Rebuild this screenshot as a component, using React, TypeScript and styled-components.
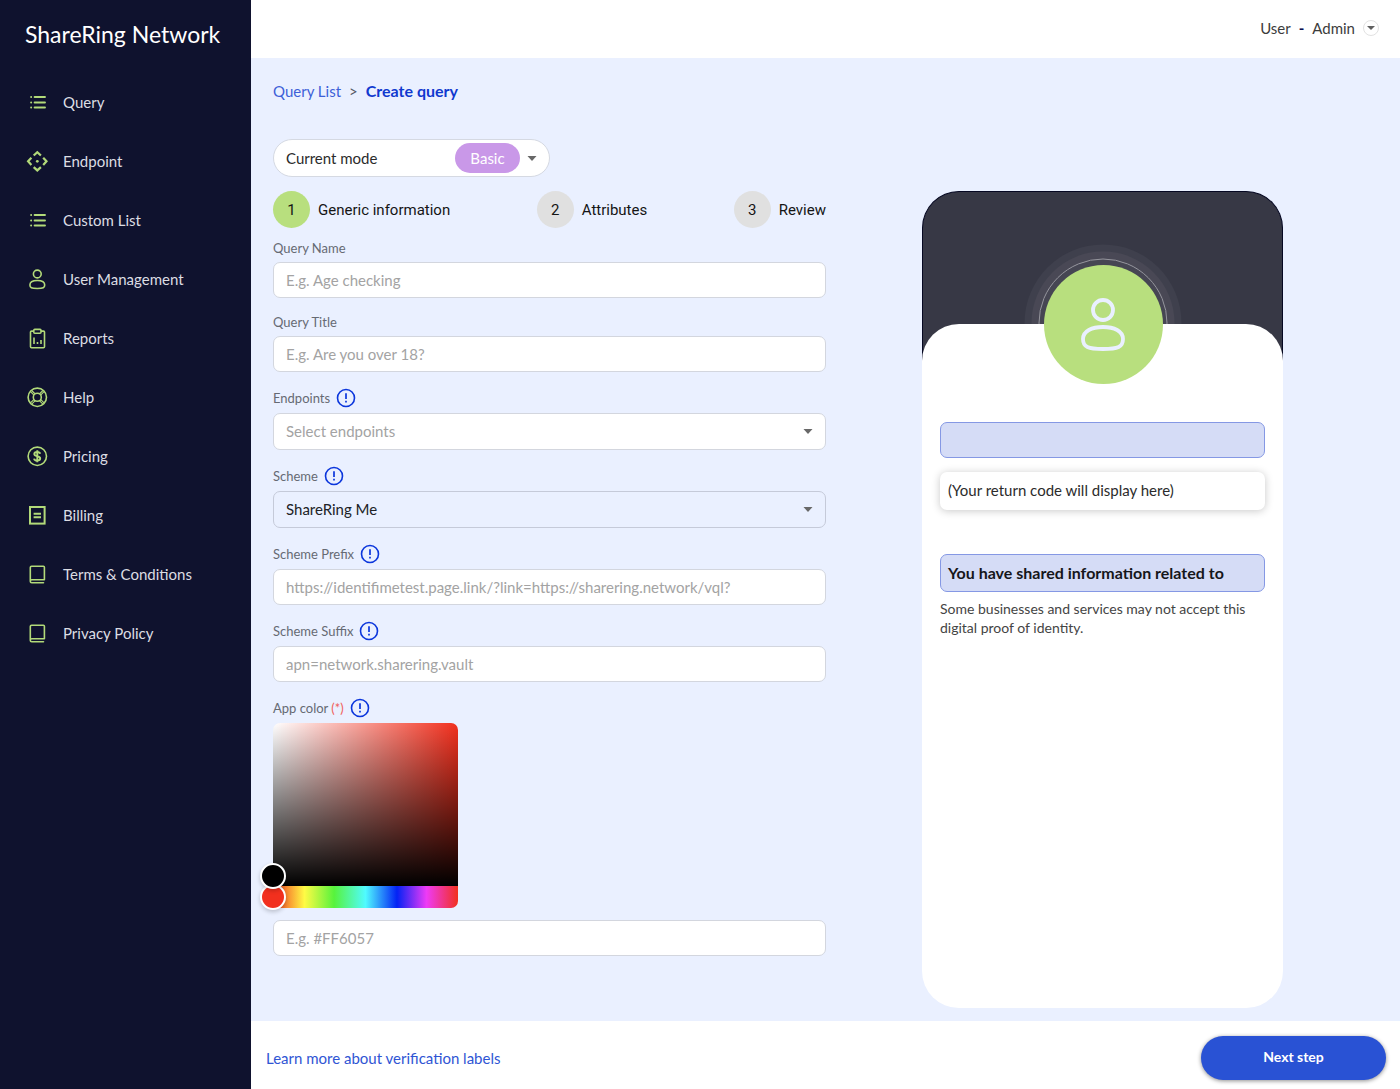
import React, { useState } from "react";
import styled, { createGlobalStyle } from "styled-components";

const GlobalStyle = createGlobalStyle`
  *, *::before, *::after { box-sizing: border-box; }
  body {
    margin: 0;
    background: #ffffff;
    color: #2b2b2b;
    font-family: Lato, "Open Sans", sans-serif;
    font-size: 15px;
    line-height: 20px;
  }
  button, input, select { font: inherit; color: inherit; margin: 0; }
  a { text-decoration: none; }
`;

const Page = styled.div`
  display: grid;
  grid-template-columns: 251px minmax(0, 1fr);
  min-height: 100vh;
`;

const Sidebar = styled.aside`
  background: #0f122e;
`;

const Brand = styled.h1`
  margin: 0;
  padding: 19px 25px 23px;
  color: #ffffff;
  font-size: 23px;
  line-height: 30px;
  font-weight: 400;
`;

const NavLink = styled.a`
  display: flex;
  align-items: center;
  gap: 14px;
  height: 59px;
  padding-left: 25px;
  color: #dcdde3;
`;

const NavIcon = styled.svg`
  width: 24px;
  height: 24px;
  flex: none;
  fill: none;
  stroke: #b2da79;
  stroke-width: 1.6;
`;

const Workspace = styled.div`
  display: flex;
  flex-direction: column;
`;

const TopBar = styled.header`
  display: flex;
  justify-content: flex-end;
  height: 58px;
  padding: 18px 21px 0 0;
`;

const AccountButton = styled.button`
  display: flex;
  align-items: center;
  gap: 8px;
  height: 20px;
  padding: 0;
  border: 0;
  background: none;
  color: #3c3c3c;
`;

const AccountDash = styled.span`
  color: #0b1050;
  font-weight: 700;
`;

const RoundCaret = styled.span`
  display: grid;
  place-items: center;
  width: 16px;
  height: 16px;
  border: 1px solid #e2e2e2;
  border-radius: 50%;
`;

const Main = styled.main`
  display: flex;
  flex-direction: column;
  flex: 1;
  padding: 23px 21px 13px 22px;
  background: #eaf0ff;
`;

const Breadcrumb = styled.nav`
  display: flex;
  gap: 8px;
  color: #555b68;
`;

const Crumb = styled.a<{ $current?: boolean }>`
  color: ${(p) => (p.$current ? "#1039cf" : "#3d60d8")};
  font-size: ${(p) => (p.$current ? "16px" : "15px")};
  font-weight: ${(p) => (p.$current ? 700 : 400)};
`;

const ModeBox = styled.div`
  display: flex;
  align-items: center;
  justify-content: space-between;
  width: 277px;
  height: 38px;
  margin-top: 38px;
  padding: 0 12px;
  border: 1px solid #d5d9e2;
  border-radius: 19px;
  background: #ffffff;
`;

const ModeControl = styled.div`
  display: flex;
  align-items: center;
  gap: 7px;
`;

const ModeSelect = styled.select`
  appearance: none;
  width: 65px;
  height: 30px;
  padding: 0 0 1px;
  border: 0;
  border-radius: 15px;
  background: #c998e8;
  color: #ffffff;
  text-align: center;
  text-align-last: center;
`;

const Columns = styled.div`
  display: grid;
  grid-template-columns: repeat(2, minmax(0, 1fr));
  flex: 1;
  margin-top: 14px;
`;

const Form = styled.form`
  display: flex;
  flex-direction: column;
  gap: 14px;
`;

const Steps = styled.ol`
  display: flex;
  justify-content: space-between;
  margin: 0 0 -4px;
  padding: 0;
  list-style: none;
  font-family: Roboto, sans-serif;
  color: #151515;
`;

const Step = styled.li`
  display: flex;
  align-items: center;
  gap: 8px;
`;

const StepNumber = styled.span<{ $active?: boolean }>`
  display: grid;
  place-items: center;
  width: 37px;
  height: 37px;
  border-radius: 50%;
  background: ${(p) => (p.$active ? "#b8df7e" : "#e0e0e0")};
`;

const Field = styled.div`
  display: flex;
  flex-direction: column;
  gap: 4px;
`;

const LabelRow = styled.div<{ $hinted?: boolean }>`
  display: flex;
  align-items: center;
  gap: 6px;
  height: ${(p) => (p.$hinted ? "23px" : "20px")};
`;

const Label = styled.label`
  color: #666a73;
  font-size: 13px;
`;

const Required = styled.span`
  color: #f0605a;
`;

const HintButton = styled.button`
  display: grid;
  width: 20px;
  height: 20px;
  padding: 0;
  border: 0;
  background: none;
`;

const TextInput = styled.input`
  width: 100%;
  height: 36px;
  padding: 0 12px;
  border: 1px solid #d3d6de;
  border-radius: 7px;
  background: #ffffff;
  &::placeholder { color: #a3a3a3; opacity: 1; }
`;

const SelectBox = styled.div`
  display: grid;
  align-items: center;
  & > * { grid-area: 1 / 1; }
`;

const SelectInput = styled.select<{ $locked?: boolean }>`
  appearance: none;
  width: 100%;
  height: 37px;
  padding: 0 12px 1px;
  border: 1px solid ${(p) => (p.$locked ? "#c5cad9" : "#d3d6de")};
  border-radius: 7px;
  background: ${(p) => (p.$locked ? "transparent" : "#ffffff")};
  color: ${(p) => (p.$locked ? "#202226" : "#a3a3a3")};
`;

const CaretSlot = styled.span`
  display: grid;
  justify-self: end;
  margin-right: 13px;
  pointer-events: none;
`;

const Picker = styled.div`
  width: 185px;
  margin-bottom: 8px;
`;

const Saturation = styled.div`
  position: relative;
  height: 163px;
  border-radius: 7px 7px 0 0;
  background:
    linear-gradient(to top, #000000, transparent),
    linear-gradient(to right, #ffffff, rgba(255, 255, 255, 0)),
    #f2301e;
`;

const SaturationHandle = styled.button`
  position: absolute;
  z-index: 1;
  left: -13px;
  bottom: -3px;
  width: 26px;
  height: 26px;
  padding: 0;
  border: 2px solid #ffffff;
  border-radius: 50%;
  background: #000000;
  box-shadow: 0 2px 4px rgba(0, 0, 0, 0.2);
`;

const HueTrack = styled.div`
  height: 22px;
  border-radius: 0 0 7px 7px;
  background: linear-gradient(
    to right,
    #f2301e 0%, #fffb45 17%, #57f33c 33%, #50fbff 50%,
    #0322f5 67%, #ee3bf6 83%, #f2301e 100%
  );
`;

const HueSlider = styled.input`
  appearance: none;
  display: block;
  width: calc(100% + 26px);
  height: 22px;
  margin: 0 -13px;
  background: none;
  &::-webkit-slider-thumb {
    appearance: none;
    width: 26px;
    height: 26px;
    border: 2px solid #ffffff;
    border-radius: 50%;
    background: #f2301e;
    box-shadow: 0 2px 4px rgba(0, 0, 0, 0.2);
  }
`;

const Phone = styled.section`
  position: relative;
  justify-self: center;
  display: flex;
  flex-direction: column;
  width: 361px;
`;

const PhoneHeader = styled.div`
  display: flex;
  justify-content: center;
  height: 170px;
  margin-bottom: -37px;
  padding-top: 52px;
  overflow: hidden;
  border: 1px solid #060822;
  border-bottom: 0;
  border-radius: 37px 37px 0 0;
  background: #373845;
`;

const Rings = styled.svg`
  width: 158px;
  height: 158px;
  flex: none;
`;

const PhoneBody = styled.div`
  position: relative;
  flex: 1;
  padding: 98px 18px 0;
  border-radius: 37px;
  background: #ffffff;
`;

const Avatar = styled.div`
  position: absolute;
  top: -59px;
  left: 50%;
  display: grid;
  place-items: center;
  width: 119px;
  height: 119px;
  margin-left: -59px;
  border-radius: 50%;
  background: #b8df7e;
`;

const PreviewBox = styled.div`
  height: 36px;
  border: 1px solid #8598e4;
  border-radius: 7px;
  background: #d5dcf6;
`;

const ReturnCode = styled.p`
  margin: 14px 0 44px;
  padding: 8px 8px 10px;
  border-radius: 7px;
  background: #ffffff;
  box-shadow: 0 1px 8px rgba(0, 0, 0, 0.22);
`;

const SharedHeading = styled.h2`
  margin: 0;
  padding: 8px 7px;
  border: 1px solid #8598e4;
  border-radius: 7px;
  background: #d5dcf6;
  color: #15161a;
  font-size: 16px;
  line-height: 20px;
`;

const Disclaimer = styled.p`
  margin: 7px 0 0;
  color: #444444;
  font-size: 14px;
  line-height: 19px;
`;

const Footer = styled.footer`
  display: flex;
  align-items: center;
  justify-content: space-between;
  padding: 15px 14px 9px 15px;
`;

const LearnLink = styled.a`
  color: #2f55d4;
`;

const NextButton = styled.button`
  width: 185px;
  height: 44px;
  padding: 0 0 2px;
  border: 0;
  border-radius: 22px;
  background: #2952d4;
  color: #ffffff;
  font-size: 14px;
  font-weight: 700;
  box-shadow: 0 1px 4px rgba(0, 0, 0, 0.45);
`;

const Caret = () => (
  <svg width="10" height="5" viewBox="0 0 10 5" aria-hidden="true">
    <path d="M0.5 0h9L5 5z" fill="#686868" />
  </svg>
);

const SmallCaret = () => (
  <svg width="8" height="4" viewBox="0 0 8 4" aria-hidden="true">
    <path d="M0 0h8L4 4z" fill="#606060" />
  </svg>
);

const listIcon = (
  <g strokeLinecap="round" strokeWidth="1.9">
    <path d="M9.6 7h10.400M9.600 12.500h10.400M9.600 17.500h10.400" />
    <path d="M6.100 7h.1M6.100 12.500h.1M6.100 17.500h.1" />
  </g>
);

const bookIcon = (
  <g strokeLinejoin="round" strokeLinecap="round">
    <path d="M18.500 20.800H6.800a1.500 1.500 0 0 1 0-3.100h12.600V5.200a1 1 0 0 0-1-1H6.500a1.200 1.200 0 0 0-1.200 1.200v13.600" />
  </g>
);

const icons: Record<string, React.ReactNode> = {
  list: listIcon,
  book: bookIcon,
  move: (
    <g strokeWidth="2.200">
      <path d="M8.700 6.500 12.300 3.200l3.600 3.300M8.700 18.100l3.600 3.300 3.600-3.300M6.400 8.700 3.100 12.300l3.300 3.600M18.200 8.700l3.300 3.600-3.300 3.600" />
      <circle cx="12.300" cy="12.300" r="1.400" fill="#b2da79" stroke="none" />
    </g>
  ),
  user: (
    <g>
      <circle cx="12.300" cy="7" r="3.900" />
      <path d="M12.300 13.500c4.500 0 7.400 1.600 7.400 4.400s-1.400 3.600-7.400 3.600-7.400-.8-7.400-3.600 2.900-4.400 7.400-4.400z" />
    </g>
  ),
  report: (
    <g strokeLinejoin="round">
      <path d="M8.800 5.100H6.500a1 1 0 0 0-1 1V20.700a1 1 0 0 0 1 1h12a1 1 0 0 0 1-1V6.100a1 1 0 0 0-1-1h-2.500" />
      <rect x="8.800" y="3.400" width="7.200" height="3.800" rx="1" />
      <path d="M9 11.500V18M12.500 16v2M16 14v4" />
    </g>
  ),
  help: (
    <g>
      <circle cx="12.300" cy="12.300" r="9.200" />
      <circle cx="12.300" cy="12.300" r="4" />
      <path d="m5.500 6.700 3.500 3.500M6.700 5.500l3.500 3.500M17.900 5.500l-3.500 3.500M19.100 6.700l-3.500 3.500M5.500 17.900l3.500-3.500M6.700 19.100l3.500-3.500M17.900 19.100l-3.500-3.500M19.100 17.900l-3.500-3.500" strokeWidth="1.100" />
    </g>
  ),
  price: (
    <g>
      <circle cx="12.300" cy="12.300" r="9.200" />
      <path d="M15.200 9.800c-.3-1.200-1.400-1.800-3-1.800s-2.900.7-2.900 2.100c0 3 5.900 1.300 5.900 4.400 0 1.400-1.300 2.100-3 2.100s-2.900-.7-3.100-2M12.300 6.300v12" strokeWidth="1.900" />
    </g>
  ),
  bill: (
    <g strokeWidth="2">
      <rect x="5" y="4" width="14.600" height="16.600" />
      <path d="M8.600 10.800h7.400M8.600 14.300h7.400" />
    </g>
  ),
};

const navItems = [
  { label: "Query", icon: "list" },
  { label: "Endpoint", icon: "move" },
  { label: "Custom List", icon: "list" },
  { label: "User Management", icon: "user" },
  { label: "Reports", icon: "report" },
  { label: "Help", icon: "help" },
  { label: "Pricing", icon: "price" },
  { label: "Billing", icon: "bill" },
  { label: "Terms & Conditions", icon: "book" },
  { label: "Privacy Policy", icon: "book" },
];

const steps = ["Generic information", "Attributes", "Review"];

function Hint({ topic }: { topic: string }) {
  return (
    <HintButton type="button" aria-label={`About ${topic}`}>
      <svg width="20" height="20" viewBox="0 0 20 20" fill="none" stroke="#0b36dc" aria-hidden="true">
        <circle cx="10" cy="10" r="8.500" strokeWidth="1.600" />
        <path d="M10 5.300v5.700M10 12.700v1.800" strokeWidth="1.700" />
      </svg>
    </HintButton>
  );
}

interface FieldLabelProps {
  id: string;
  text: string;
  hinted?: boolean;
  required?: boolean;
}

function FieldLabel({ id, text, hinted, required }: FieldLabelProps) {
  return (
    <LabelRow $hinted={hinted}>
      <Label htmlFor={id}>
        {text}
        {required && <Required> (*)</Required>}
      </Label>
      {hinted && <Hint topic={text} />}
    </LabelRow>
  );
}

interface TextFieldProps {
  id: string;
  label: string;
  placeholder: string;
  hinted?: boolean;
}

function TextField({ id, label, placeholder, hinted }: TextFieldProps) {
  return (
    <Field>
      <FieldLabel id={id} text={label} hinted={hinted} />
      <TextInput id={id} type="text" placeholder={placeholder} />
    </Field>
  );
}

interface SelectFieldProps {
  id: string;
  label: string;
  option: string;
  locked?: boolean;
}

function SelectField({ id, label, option, locked }: SelectFieldProps) {
  return (
    <Field>
      <FieldLabel id={id} text={label} hinted />
      <SelectBox>
        <SelectInput id={id} $locked={locked}>
          <option>{option}</option>
        </SelectInput>
        <CaretSlot>
          <Caret />
        </CaretSlot>
      </SelectBox>
    </Field>
  );
}

export default function App() {
  const [hue, setHue] = useState(0);

  return (
    <Page>
      <GlobalStyle />
      <Sidebar>
        <Brand>ShareRing Network</Brand>
        <nav>
          {navItems.map((item) => (
            <NavLink key={item.label} href="#">
              <NavIcon viewBox="0 0 24 24" aria-hidden="true">
                {icons[item.icon]}
              </NavIcon>
              {item.label}
            </NavLink>
          ))}
        </nav>
      </Sidebar>
      <Workspace>
        <TopBar>
          <AccountButton type="button">
            <span>User</span>
            <AccountDash>-</AccountDash>
            <span>Admin</span>
            <RoundCaret>
              <SmallCaret />
            </RoundCaret>
          </AccountButton>
        </TopBar>
        <Main>
          <Breadcrumb aria-label="Breadcrumb">
            <Crumb href="#">Query List</Crumb>
            <span>&gt;</span>
            <Crumb href="#" $current>
              Create query
            </Crumb>
          </Breadcrumb>
          <ModeBox>
            <label htmlFor="mode">Current mode</label>
            <ModeControl>
              <ModeSelect id="mode">
                <option>Basic</option>
              </ModeSelect>
              <Caret />
            </ModeControl>
          </ModeBox>
          <Columns>
            <Form>
              <Steps>
                {steps.map((step, index) => (
                  <Step key={step}>
                    <StepNumber $active={index === 0}>{index + 1}</StepNumber>
                    {step}
                  </Step>
                ))}
              </Steps>
              <TextField id="query-name" label="Query Name" placeholder="E.g. Age checking" />
              <TextField id="query-title" label="Query Title" placeholder="E.g. Are you over 18?" />
              <SelectField id="endpoints" label="Endpoints" option="Select endpoints" />
              <SelectField id="scheme" label="Scheme" option="ShareRing Me" locked />
              <TextField
                id="scheme-prefix"
                label="Scheme Prefix"
                placeholder="https://identifimetest.page.link/?link=https://sharering.network/vql?"
                hinted
              />
              <TextField
                id="scheme-suffix"
                label="Scheme Suffix"
                placeholder="apn=network.sharering.vault"
                hinted
              />
              <Field>
                <FieldLabel id="app-color" text="App color" hinted required />
                <Picker>
                  <Saturation>
                    <SaturationHandle type="button" aria-label="Saturation and brightness" />
                  </Saturation>
                  <HueTrack>
                    <HueSlider
                      type="range"
                      aria-label="Hue"
                      min={0}
                      max={360}
                      value={hue}
                      onChange={(event) => setHue(Number(event.target.value))}
                    />
                  </HueTrack>
                </Picker>
                <TextInput id="app-color" type="text" placeholder="E.g. #FF6057" />
              </Field>
            </Form>
            <Phone aria-label="Preview">
              <PhoneHeader>
                <Rings viewBox="0 0 158 158" aria-hidden="true">
                  <circle cx="79" cy="79" r="78.500" fill="#3f404d" />
                  <circle cx="79" cy="79" r="71.500" fill="#494855" />
                  <circle cx="79" cy="79" r="64" fill="#464653" stroke="#96969e" />
                </Rings>
              </PhoneHeader>
              <PhoneBody>
                <Avatar>
                  <svg width="46" height="56" viewBox="0 0 46 56" fill="none" stroke="#eaf0ff" strokeWidth="3.800" aria-hidden="true">
                    <circle cx="23" cy="13" r="10" />
                    <path d="M23 30C34 30 43 34 43 42C43 50 38 52 23 52S3 50 3 42C3 34 12 30 23 30Z" />
                  </svg>
                </Avatar>
                <PreviewBox />
                <ReturnCode>(Your return code will display here)</ReturnCode>
                <SharedHeading>You have shared information related to</SharedHeading>
                <Disclaimer>
                  Some businesses and services may not accept this digital proof of identity.
                </Disclaimer>
              </PhoneBody>
            </Phone>
          </Columns>
        </Main>
        <Footer>
          <LearnLink href="#">Learn more about verification labels</LearnLink>
          <NextButton type="button">Next step</NextButton>
        </Footer>
      </Workspace>
    </Page>
  );
}
